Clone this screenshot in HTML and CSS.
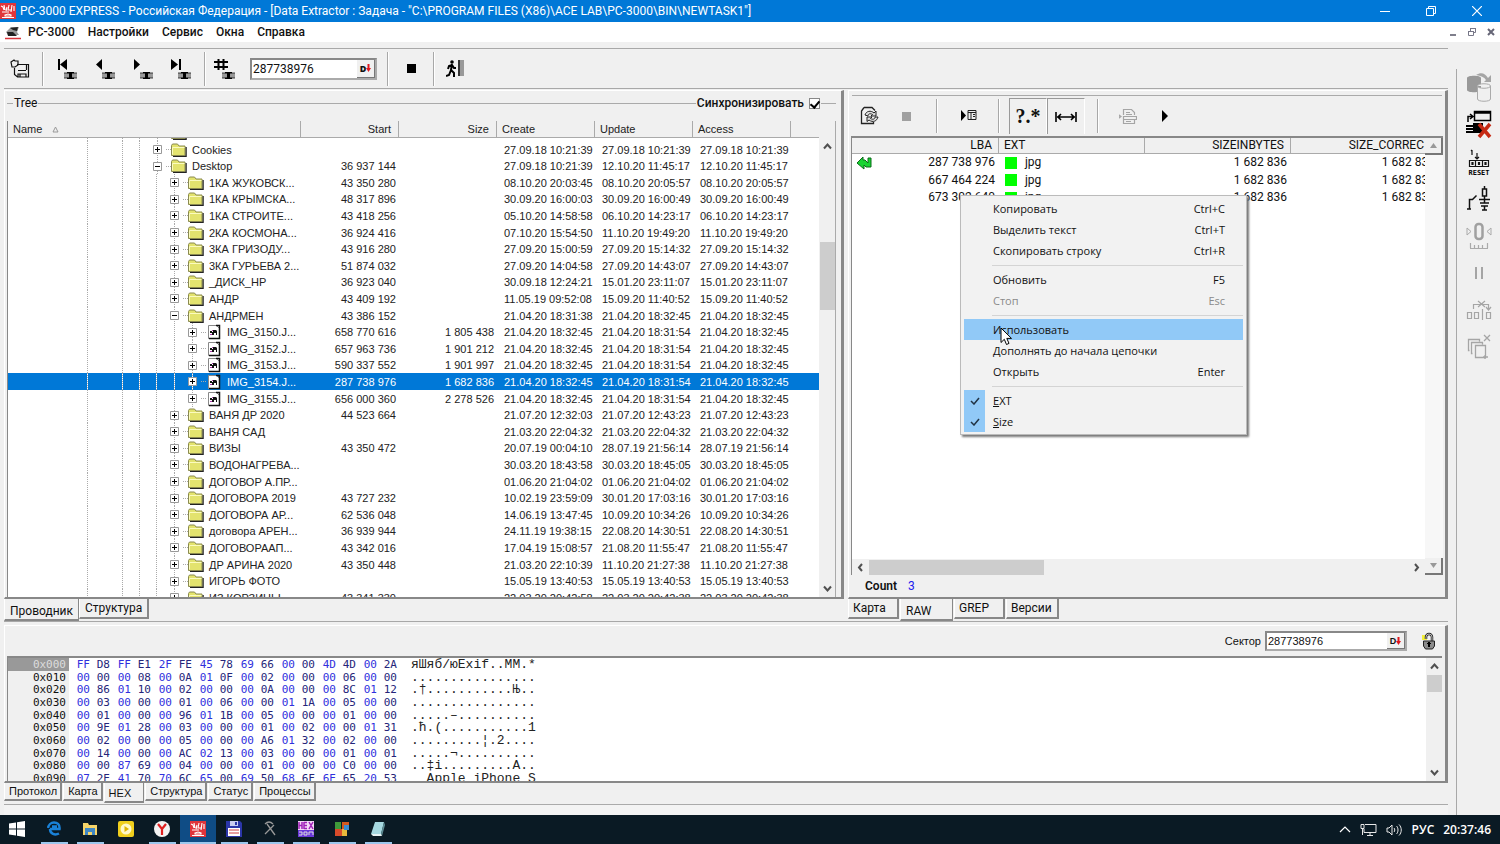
FILE: index.html
```
<!DOCTYPE html>
<html lang="ru">
<head>
    <meta charset="UTF-8">
    <meta name="viewport" content="width=device-width, initial-scale=1.0">
    <title>PC-3000 EXPRESS</title>
    <link rel="stylesheet" href="styles.css">
</head>
<body>
    <svg class="defs" width="0" height="0" aria-hidden="true">
        <symbol id="logo" viewBox="0 0 16 16">
            <rect width="16" height="16" fill="#e0353b"/>
            <path d="M1 3l2 1 1 3M4 2l1 5M7 4L6 8M9 2l-1 5h4M12 2l-1 7M14 3v5M2 9h7M5 12l3-1 3 1v1H5zM2 14.500h12" fill="none" stroke="#fff" stroke-width="1.100"/>
        </symbol>
        <symbol id="disk" viewBox="0 0 13 7">
            <path d="M0 0h13v7H0z" fill="#999"/>
            <path d="M0 1h3v1H0zM10 1h3v1h-3zM0 5h3v1H0zM10 5h3v1h-3z" fill="#666"/>
            <path d="M3 0h7v1.500H8v4h2V7H3V5.500h2v-4H3z" fill="#000"/>
        </symbol>
        <symbol id="folder" viewBox="0 0 16 14">
            <path d="M2 13.500h13V4" fill="none" stroke="#222" stroke-width="1.500"/>
            <path d="M.5 12.500V2.500l1-1.500h5l1.500 2h6v9.500z" fill="#e3e36e" stroke="#8a8a50"/>
            <path d="M1.500 11.500v-7h12" fill="none" stroke="#fbfbc0"/>
        </symbol>
        <symbol id="picture" viewBox="0 0 14 16">
            <path d="M1.500 1.500h8l3 3v10h-11z" fill="#fff" stroke="#888"/>
            <path d="M9 1.500h3.500v13H2" fill="none" stroke="#111" stroke-width="1.500"/>
            <path d="M3 7h2v1h1V6h3l1 1v4H9V9H7v2H5V9H3z" fill="#111"/>
            <path d="M3 10h2v1H3zM5 6h1v1H5z" fill="#b03bb0"/>
        </symbol>
        <symbol id="up" viewBox="0 0 9 9"><path d="M1 6.500l3.500-4 3.500 4" fill="none" stroke="#505050" stroke-width="2"/></symbol>
        <symbol id="down" viewBox="0 0 9 9"><path d="M1 2.500l3.500 4 3.500-4" fill="none" stroke="#505050" stroke-width="2"/></symbol>
        <symbol id="left" viewBox="0 0 9 9"><path d="M6 1L3 4.500 6 8" fill="none" stroke="#505050" stroke-width="2"/></symbol>
        <symbol id="right" viewBox="0 0 9 9"><path d="M3 1l3 3.500L3 8" fill="none" stroke="#505050" stroke-width="2"/></symbol>
        <symbol id="red-arrow" viewBox="0 0 5 8"><path d="M1.500 0h2v4H5L2.500 8 0 4h1.500z" fill="#e0161c"/></symbol>
    </svg>

    <header class="titlebar">
        <svg width="16" height="16"><use href="#logo"/></svg>
        <h1>PC-3000 EXPRESS - Российская Федерация - [Data Extractor : Задача - "C:\PROGRAM FILES (X86)\ACE LAB\PC-3000\BIN\NEWTASK1"]</h1>
        <button aria-label="Свернуть"><svg width="10" height="10"><path d="M0 5.500h10" stroke="#fff"/></svg></button>
        <button aria-label="Развернуть"><svg width="10" height="10"><path d="M.5 2.500h7v7h-7zM2.500 2V.5h7v7H8" fill="none" stroke="#fff"/></svg></button>
        <button aria-label="Закрыть"><svg width="10" height="10"><path d="M0 0l10 10M10 0L0 10" stroke="#fff" stroke-width="1.200"/></svg></button>
    </header>

    <nav class="menubar">
        <svg width="16" height="15"><path d="M1 7l5-5h8l-2 5 2 3H3z" fill="#999"/><path d="M5 3l8-1-1 4-4-1zM2 7h6l4 4H3z" fill="#222"/><path d="M0 13.500h16" stroke="#d8333a" stroke-width="1.500"/></svg>
        <button>PC-3000</button>
        <button>Настройки</button>
        <button>Сервис</button>
        <button>Окна</button>
        <button>Справка</button>
        <div class="mdi">
            <button aria-label="Свернуть окно"><svg width="10" height="10"><path d="M2 8h6" stroke="#556" stroke-width="1.500"/></svg></button>
            <button aria-label="Восстановить окно"><svg width="10" height="10"><path d="M1.500 4.500h5v4h-5zM3.500 4V1.500h5v4H7M1 4.500h6M3 1.500h6" fill="none" stroke="#778"/></svg></button>
            <button aria-label="Закрыть окно"><svg width="10" height="10"><path d="M2 2l6 6M8 2L2 8" stroke="#667" stroke-width="2"/></svg></button>
        </div>
    </nav>

    <div class="shell">
        <main class="workspace">
            <div class="toolbar">
                <button class="tool-save" aria-label="Сохранить задачу"><svg width="20" height="20"><path d="M7 5.500h11.500v12.500h-11L4.500 15.500V9M8 11.500h8M16.500 5v6M8 18v-3h8v3M10 15.500v3M1 3l3-2 1 1h3v4L5 8H2z" fill="none" stroke="#111" stroke-width="1.200"/></svg></button>
                <span class="sep"></span>
                <button class="nav" aria-label="В начало"><svg width="20" height="22"><path d="M1 1h2v11H1zM10 1v11L3 6.500z" fill="#000"/><use href="#disk" x="7" y="14" width="13" height="7"/></svg></button>
                <button class="nav" aria-label="Назад"><svg width="20" height="22"><path d="M7 1v11L1 6.500z" fill="#000"/><use href="#disk" x="7" y="14" width="13" height="7"/></svg></button>
                <button class="nav" aria-label="Вперёд"><svg width="20" height="22"><path d="M1 1v11l6-5.500z" fill="#000"/><use href="#disk" x="7" y="14" width="13" height="7"/></svg></button>
                <button class="nav" aria-label="В конец"><svg width="20" height="22"><path d="M0 1v11l7-5.500zM8 1h2v11H8z" fill="#000"/><use href="#disk" x="7" y="14" width="13" height="7"/></svg></button>
                <span class="sep"></span>
                <button class="nav" aria-label="Перейти к сектору"><svg width="22" height="22"><path d="M4.500 1v11M9.500 1v11M0 4h14M0 9h14" stroke="#000" stroke-width="2"/><use href="#disk" x="8" y="14" width="13" height="7"/></svg></button>
                <div class="field">
                    <input type="text" value="287738976" aria-label="LBA">
                    <button>D<svg width="5" height="8"><use href="#red-arrow"/></svg></button>
                </div>
                <span class="sep"></span>
                <button class="tool-stop" aria-label="Стоп"><svg width="9" height="9"><rect width="9" height="9"/></svg></button>
                <span class="sep"></span>
                <button class="tool-exit" aria-label="Выход"><svg width="20" height="20"><path d="M12 1h2v16h-2z" fill="#333"/><path d="M14 1h4v16h-4z" fill="#999"/><circle cx="6" cy="3" r="1.800"/><path d="M6 5l-1 6 3 3v4M5 11l-2 5-3 1M2 10l1-3 3-1 2 3h2" fill="none" stroke="#000" stroke-width="2"/></svg></button>
            </div>

            <div class="panes">
                <section class="pane-left">
                    <div class="frame">
                        <div class="tree-head">
                            <h2>Tree</h2>
                            <label class="sync">Синхронизировать <input type="checkbox" checked></label>
                        </div>
                        <div class="tree-body">
                            <div class="tree-scroll" id="treeScroll">
                                <table class="tree">
                                    <colgroup><col class="c-name"><col class="c-num"><col class="c-num"><col class="c-date"><col class="c-date"><col class="c-date"><col></colgroup>
                                    <thead>
                                        <tr><th>Name <svg width="7" height="7"><path d="M3.500 1L6 6H1z" fill="none" stroke="#999"/></svg></th><th class="num">Start</th><th class="num">Size</th><th>Create</th><th>Update</th><th>Access</th><th></th></tr>
                                    </thead>
                                    <tbody id="treeRows"></tbody>
                                </table>
                            </div>
                            <div class="vscroll">
                                <svg width="9" height="9"><use href="#up"/></svg>
                                <span class="track-tree"></span>
                                <svg width="9" height="9"><use href="#down"/></svg>
                            </div>
                        </div>
                    </div>
                    <div class="tabs">
                        <button class="active">Проводник</button>
                        <button>Структура</button>
                    </div>
                </section>

                <section class="pane-right">
                    <div class="frame">
                        <div class="raw-tools">
                            <button class="t-refresh" aria-label="Обновить"><svg width="20" height="20"><path d="M4 1.500h8l3 3M4 1.500L1.500 5v12.500h12V16" fill="none" stroke="#222" stroke-width="1.300"/><path d="M5 9c1-4 6-5 9-2l2-2v5h-5l1.500-1.500C10 7 8 8 8 10zM18 11c-1 4-5 6-9 3l-2 1.500V11h5l-1.500 1.500C13 14 15 13 15 11z" fill="#ddd" stroke="#222"/></svg></button>
                            <button class="t-stop" aria-label="Остановить" disabled><svg width="9" height="9"><rect width="9" height="9" fill="#a0a0a0"/></svg></button>
                            <span class="sep"></span>
                            <button class="t-panel" aria-label="Панель"><svg width="17" height="14"><path d="M1 1v11l5-5.500z"/><path d="M8 1.500h8v9H8zM8 3.500h8M11 4v6M13 5.500h2M13 7.500h2" fill="none" stroke="#222"/></svg></button>
                            <span class="sep"></span>
                            <button class="toggle mask" aria-label="Расширение">?.*</button>
                            <button class="toggle" aria-label="Размер"><svg width="22" height="12"><path d="M1 1v10M21 1v10M2 6h18M6 3L3 6l3 3M16 3l3 3-3 3" fill="none" stroke="#000" stroke-width="1.600"/></svg></button>
                            <span class="sep"></span>
                            <button class="t-print" aria-label="Отчёт" disabled><svg width="18" height="17"><path d="M4.500 7V1.500h8l3 3V7M4.500 8.500h13v3h-13zM4.500 12v3.500h11V12M7 4.500h4M7 6.500h6M7 13.500h5M0 7v3l2-1.500z" fill="none" stroke="#a5a5a5" stroke-width="1.200"/></svg></button>
                            <button class="t-play" aria-label="Запуск"><svg width="6" height="12"><path d="M0 0v12l6-6z"/></svg></button>
                        </div>
                        <div class="raw-box">
                            <div class="raw-main">
                                <div class="raw-scroll">
                                    <table class="raw">
                                        <colgroup><col class="r-mark"><col class="r-lba"><col class="r-size"><col class="r-size"><col></colgroup>
                                        <thead>
                                            <tr><th colspan="2" class="num">LBA</th><th>EXT</th><th class="num">SIZEINBYTES</th><th class="num">SIZE_CORREC</th></tr>
                                        </thead>
                                        <tbody id="rawRows"></tbody>
                                    </table>
                                </div>
                                <div class="hscroll">
                                    <svg width="9" height="9"><use href="#left"/></svg>
                                    <span></span>
                                    <svg width="9" height="9"><use href="#right"/></svg>
                                </div>
                            </div>
                            <div class="raw-side">
                                <button aria-label="Вверх"><svg width="7" height="5"><path d="M3.500 0L7 5H0z" fill="#999"/></svg></button>
                                <button aria-label="Вниз"><svg width="7" height="5"><path d="M3.500 5L7 0H0z" fill="#999"/></svg></button>
                            </div>

                            <ul class="context-menu">
                                <li><button><span>Копировать</span><kbd>Ctrl+C</kbd></button></li>
                                <li><button><span>Выделить текст</span><kbd>Ctrl+T</kbd></button></li>
                                <li><button><span>Скопировать строку</span><kbd>Ctrl+R</kbd></button></li>
                                <li class="divider"></li>
                                <li><button><span>Обновить</span><kbd>F5</kbd></button></li>
                                <li><button disabled><span>Стоп</span><kbd>Esc</kbd></button></li>
                                <li class="divider"></li>
                                <li class="hover"><button><span>Использовать</span></button>
                                    <svg class="cursor" width="13" height="19"><path d="M1 1v14.500l3.300-3.200 2.200 5.200 2.500-1.100-2.200-5H11.500z" fill="#fff" stroke="#000"/></svg>
                                </li>
                                <li><button><span>Дополнять до начала цепочки</span></button></li>
                                <li><button><span>Открыть</span><kbd>Enter</kbd></button></li>
                                <li class="divider"></li>
                                <li class="checked"><button><svg width="10" height="8"><path d="M1 4l3 3 5-6" fill="none" stroke="#234" stroke-width="1.500"/></svg><span><u>E</u>XT</span></button></li>
                                <li class="checked"><button><svg width="10" height="8"><path d="M1 4l3 3 5-6" fill="none" stroke="#234" stroke-width="1.500"/></svg><span><u>S</u>ize</span></button></li>
                            </ul>
                        </div>
                        <p class="count">Count <b>3</b></p>
                    </div>
                    <div class="tabs raw-tabs">
                        <button>Карта</button>
                        <button class="active">RAW</button>
                        <button>GREP</button>
                        <button>Версии</button>
                    </div>
                </section>
            </div>

            <section class="hex-pane">
                <div class="frame">
                    <div class="hex-tools">
                        <label for="sector">Сектор</label>
                        <div class="field">
                            <input type="text" id="sector" value="287738976">
                            <button>D<svg width="5" height="8"><use href="#red-arrow"/></svg></button>
                        </div>
                        <button class="lock" aria-label="Блокировка"><svg width="14" height="18"><path d="M0 3h5v5H0z" fill="#f4f03c"/><path d="M4 7V5a3 3 0 0 1 6 0v5" fill="none" stroke="#222" stroke-width="2.500"/><path d="M4 7V5a3 3 0 0 1 6 0v5" fill="none" stroke="#bbb"/><path d="M1.500 9h11v5l-2 3h-7l-2-3z" fill="#8c8c8c" stroke="#222"/><path d="M6 10h2v5H6zM5 11h4v1H5z"/></svg></button>
                    </div>
                    <div class="hex-box">
                        <div class="hex-scroll">
                            <table class="hex"><tbody id="hexRows"></tbody></table>
                        </div>
                        <div class="vscroll">
                            <svg width="9" height="9"><use href="#up"/></svg>
                            <span class="track-hex"></span>
                            <svg width="9" height="9"><use href="#down"/></svg>
                        </div>
                    </div>
                </div>
                <div class="tabs hex-tabs">
                    <button>Протокол</button>
                    <button>Карта</button>
                    <button class="active">HEX</button>
                    <button>Структура</button>
                    <button>Статус</button>
                    <button>Процессы</button>
                </div>
            </section>
            <div class="statusbar"></div>
        </main>

        <aside class="side">
            <button aria-label="Образы дисков" disabled><svg width="28" height="32"><path d="M2 6c0-3 14-3 14 0v12c0 3-14 3-14 0z" fill="#999"/><path d="M11 3c5-3 9-2 12 3l3-3v7h-7l2-2c-2-3-5-4-10-5z" fill="#a5a5a5"/><path d="M12.500 14c0-3 13-3 13 0v13c0 3-13 3-13 0zM12.500 14c0 3 13 3 13 0" fill="#f0f0f0" stroke="#aaa"/></svg></button>
            <button aria-label="Закрыть порт"><svg width="28" height="30"><path d="M9.500 1.500h16v9h-16zM9 3h17M3 12V6.500h4M5 4l3 2.500L5 9" fill="none" stroke="#000" stroke-width="1.500"/><path d="M1 15h17v2H1zM1 18h17v2H1zM1 21h16v2H1zM8 13h10v9H8z"/><path d="M14 14l11 13M25 14L14 27" stroke="#c62a14" stroke-width="3.500"/></svg></button>
            <button aria-label="RESET"><svg width="24" height="26"><path d="M5 1v5M4 2l1-1M10 4v6M8 8l2 2 2-2M2.500 11.500h19v6h-19zM8.500 11v7M15.500 11v7M5 13.500h1v2H5zM11.500 13.500h1v2h-1zM18 13.500h1v2h-1z" fill="none" stroke="#111" stroke-width="1.200"/><text x="12" y="26" text-anchor="middle">RESET</text></svg></button>
            <button aria-label="Питание"><svg width="26" height="28"><path d="M1 24h4M3.500 24V14.500h3l4-4M13 14.500h11M18.500 1v3M16.500 4h4v7h-4zM18.500 11v7M14 18h9M15 21h7M18.500 21v4M16 25h5" fill="none" stroke="#111" stroke-width="1.500"/></svg></button>
            <button aria-label="Счётчик" disabled><svg width="26" height="28"><path d="M1 6v7l4-3.500zM25 6v7l-4-3.500z" fill="none" stroke="#aaa"/><rect x="9.500" y="2" width="7" height="15" rx="3" fill="none" stroke="#a0a0a0" stroke-width="2.500"/><path d="M4 26.500h18M4.500 21v5M8.500 23v3M12.500 23v3M16.500 23v3M21.500 21v5" fill="none" stroke="#aaa" stroke-width="1.200"/></svg></button>
            <button aria-label="Пауза" disabled><svg width="10" height="12"><path d="M2 0v12M8 0v12" stroke="#a5a5a5" stroke-width="2"/></svg></button>
            <button aria-label="Удалить блок" disabled><svg width="26" height="20"><path d="M1.500 12.500h4v6h-4zM8.500 12.500h4v6h-4zM20.500 12.500h4v6h-4zM16.500 9v11M7.500 9V4.500h15V9M20 7l2.500 3L25 7M12 1l7 6M19 1l-7 6" fill="none" stroke="#a5a5a5" stroke-width="1.200"/></svg></button>
            <button aria-label="Копии" disabled><svg width="26" height="26"><path d="M3.500 16.500h-1v-11h11v2M6.500 19.500h-1v-11h11v2M9.500 11.500h10v12h-10zM17 23h5M19 21v4M18 1l6 6M24 1l-6 6" fill="none" stroke="#a5a5a5" stroke-width="1.300"/></svg></button>
        </aside>
    </div>

    <footer class="taskbar">
        <button aria-label="Пуск"><svg width="16" height="16"><path d="M0 2.500L7 1.500V7.500H0zM8 1.300L16 0v7.500H8zM0 8.500h7v6L0 13.500zM8 8.500h8V16l-8-1.300z" fill="#fff"/></svg></button>
        <button class="open" aria-label="Edge"><svg width="14" height="15"><path d="M3 8h9.500C13 3 10 1.500 7 1.500 4 1.500 1.500 4 1 7M3 8c0 5 5 6.500 9 4.500M5 5.500h5" fill="none" stroke="#1a82d8" stroke-width="2.500"/></svg></button>
        <button class="open" aria-label="Проводник"><svg width="16" height="14"><path d="M1 1h5l1 2h8v10H1z" fill="#f6d468"/><path d="M3 6h10v7h-3v-3H6v3H3z" fill="#3f87c4"/></svg></button>
        <button aria-label="Плеер"><svg width="16" height="16"><rect width="16" height="16" rx="2" fill="#f0cf1d"/><circle cx="8" cy="8" r="5.500" fill="#fff8c8"/><path d="M6.500 5v6L11 8z" fill="#e0b400"/></svg></button>
        <button class="open" aria-label="Яндекс"><svg width="16" height="16"><circle cx="8" cy="8" r="8" fill="#f3f3f3"/><path d="M4 3l4 5 4-5M8 8v6" fill="none" stroke="#e02020" stroke-width="2.200"/></svg></button>
        <button class="current" aria-label="PC-3000"><svg width="16" height="16"><use href="#logo"/></svg></button>
        <button class="open" aria-label="Total Commander"><svg width="16" height="16"><path d="M0 0h14l2 2v14H0z" fill="#2b36a8"/><path d="M4 0h8v5H4z" fill="#c8ccf0"/><path d="M9 1h2v3H9z" fill="#2b36a8"/><path d="M2 7h12v8H2z" fill="#fff"/><path d="M3 9h10M3 12h10" stroke="#d04040"/></svg></button>
        <button class="open" aria-label="Утилиты"><svg width="14" height="16"><path d="M2 3c3-3 6-2 8 0M4 3l8 11M11 4L2 13" fill="none" stroke="#999" stroke-width="1.300"/></svg></button>
        <button class="open" aria-label="HEX"><svg width="16" height="16"><path d="M0 0h16v9H0z" fill="#f3d8f6"/><path d="M0 9h16v7H0z" fill="#6a38d8"/><path d="M1 1v7M4 1v7M1 4.500h3M6 1v7M6 1.500h3M6 4.500h3M6 7.500h3M11 1l4 7M15 1l-4 7" stroke="#a020b8" stroke-width="1.500"/><path d="M1 11h3v3H1M6 11h3v3H6zM11 14v-3h4v3" fill="none" stroke="#ddd"/></svg></button>
        <button class="open" aria-label="Монитор"><svg width="16" height="16"><path d="M1 1h6v7H1z" fill="#3f9a3a"/><path d="M8 1h7v7H8z" fill="#d45a20"/><path d="M1 8h7v7H1z" fill="#d84b2a"/><path d="M8 8h5v7H8z" fill="#e8b93c"/><path d="M10 4h5v5h-5z" fill="#3c8cd0"/></svg></button>
        <button class="open" aria-label="Блокнот"><svg width="16" height="16"><path d="M5 1h9l-3 12H1z" fill="#a6d8e0"/><path d="M14 1l1 3-3 11-1-2z" fill="#5d8d95"/><path d="M1 13h10l1 2H3z" fill="#e8f3f4"/></svg></button>
        <div class="tray">
            <svg width="12" height="7"><path d="M1 6l5-5 5 5" fill="none" stroke="#fff" stroke-width="1.200"/></svg>
            <svg width="17" height="14"><path d="M5 1.500h11v8H4V6M7 12.500h6M10 10v2M1 1.500h3v4H1zM2.500 6v6" fill="none" stroke="#e8e8e8"/></svg>
            <svg width="17" height="14"><path d="M1 5h2l3-3v10L3 9H1zM8 5c1 1 1 3 0 4M10.500 3c2 2 2 6 0 8M13 1.500c3 3 3 8 0 11" fill="none" stroke="#e8e8e8"/></svg>
            <span>РУС</span>
            <time>20:37:46</time>
        </div>
    </footer>

    <script>
        // level, open, name, start, size, create, update, access
        const tree = [
            [0, false, "", "", "", "", "", ""],
            [0, false, "Cookies", "", "", "27.09.18 10:21:39", "27.09.18 10:21:39", "27.09.18 10:21:39"],
            [0, true, "Desktop", "36 937 144", "", "27.09.18 10:21:39", "12.10.20 11:45:17", "12.10.20 11:45:17"],
            [1, false, "1КА ЖУКОВСК...", "43 350 280", "", "08.10.20 20:03:45", "08.10.20 20:05:57", "08.10.20 20:05:57"],
            [1, false, "1КА КРЫМСКА...", "48 317 896", "", "30.09.20 16:00:03", "30.09.20 16:00:49", "30.09.20 16:00:49"],
            [1, false, "1КА СТРОИТЕ...", "43 418 256", "", "05.10.20 14:58:58", "06.10.20 14:23:17", "06.10.20 14:23:17"],
            [1, false, "2КА КОСМОНА...", "36 924 416", "", "07.10.20 15:54:50", "11.10.20 19:49:20", "11.10.20 19:49:20"],
            [1, false, "3КА ГРИЗОДУ...", "43 916 280", "", "27.09.20 15:00:59", "27.09.20 15:14:32", "27.09.20 15:14:32"],
            [1, false, "3КА ГУРЬЕВА 2...", "51 874 032", "", "27.09.20 14:04:58", "27.09.20 14:43:07", "27.09.20 14:43:07"],
            [1, false, "_ДИСК_HP", "36 923 040", "", "30.09.18 12:24:21", "15.01.20 23:11:07", "15.01.20 23:11:07"],
            [1, false, "АНДР", "43 409 192", "", "11.05.19 09:52:08", "15.09.20 11:40:52", "15.09.20 11:40:52"],
            [1, true, "АНДРМЕН", "43 386 152", "", "21.04.20 18:31:38", "21.04.20 18:32:45", "21.04.20 18:32:45"],
            [2, false, "IMG_3150.J...", "658 770 616", "1 805 438", "21.04.20 18:32:45", "21.04.20 18:31:54", "21.04.20 18:32:45"],
            [2, false, "IMG_3152.J...", "657 963 736", "1 901 212", "21.04.20 18:32:45", "21.04.20 18:31:54", "21.04.20 18:32:45"],
            [2, false, "IMG_3153.J...", "590 337 552", "1 901 997", "21.04.20 18:32:45", "21.04.20 18:31:54", "21.04.20 18:32:45"],
            [2, false, "IMG_3154.J...", "287 738 976", "1 682 836", "21.04.20 18:32:45", "21.04.20 18:31:54", "21.04.20 18:32:45"],
            [2, false, "IMG_3155.J...", "656 000 360", "2 278 526", "21.04.20 18:32:45", "21.04.20 18:31:54", "21.04.20 18:32:45"],
            [1, false, "ВАНЯ ДР 2020", "44 523 664", "", "21.07.20 12:32:03", "21.07.20 12:43:23", "21.07.20 12:43:23"],
            [1, false, "ВАНЯ САД", "", "", "21.03.20 22:04:32", "21.03.20 22:04:32", "21.03.20 22:04:32"],
            [1, false, "ВИЗЫ", "43 350 472", "", "20.07.19 00:04:10", "28.07.19 21:56:14", "28.07.19 21:56:14"],
            [1, false, "ВОДОНАГРЕВА...", "", "", "30.03.20 18:43:58", "30.03.20 18:45:05", "30.03.20 18:45:05"],
            [1, false, "ДОГОВОР А.ПР...", "", "", "01.06.20 21:04:02", "01.06.20 21:04:02", "01.06.20 21:04:02"],
            [1, false, "ДОГОВОРА 2019", "43 727 232", "", "10.02.19 23:59:09", "30.01.20 17:03:16", "30.01.20 17:03:16"],
            [1, false, "ДОГОВОРА АР...", "62 536 048", "", "14.06.19 13:47:45", "10.09.20 10:34:26", "10.09.20 10:34:26"],
            [1, false, "договора АРЕН...", "36 939 944", "", "24.11.19 19:38:15", "22.08.20 14:30:51", "22.08.20 14:30:51"],
            [1, false, "ДОГОВОРААП...", "43 342 016", "", "17.04.19 15:08:57", "21.08.20 11:55:47", "21.08.20 11:55:47"],
            [1, false, "ДР АРИНА 2020", "43 350 448", "", "21.03.20 22:10:39", "11.10.20 21:27:38", "11.10.20 21:27:38"],
            [1, false, "ИГОРЬ ФОТО", "", "", "15.05.19 13:40:53", "15.05.19 13:40:53", "15.05.19 13:40:53"],
            [1, false, "ИЗ КОРЗИНЫ", "43 341 330", "", "22.03.20 20:42:58", "22.03.20 20:42:38", "22.03.20 20:42:38"]
        ];
        const selected = 15;

        function nameCell(level, open, name) {
            let guides = '<i class="guide"></i><i class="gap"></i><i class="guide"></i><i class="guide"></i>';
            for (let i = 0; i < level; i++) {
                guides += `<i class="guide${i > 0 ? " own" : ""}"></i>`;
            }
            const icon = level === 2
                ? '<svg width="16" height="16"><use href="#picture"/></svg>'
                : '<svg width="16" height="14"><use href="#folder"/></svg>';
            return `<div class="node">${guides}<i class="guide own"><button class="expander" aria-label="${open ? "Свернуть" : "Развернуть"}">` +
                `<svg width="9" height="9"><path d="M.5 .5h8v8h-8z" fill="#fff" stroke="#999"/><path d="M2 4.500h5${open ? "" : "M4.500 2v5"}" stroke="#000"/></svg>` +
                `</button></i><i class="stub"></i>${icon}<span>${name}</span></div>`;
        }

        document.getElementById("treeRows").innerHTML = tree.map((r, i) =>
            `<tr${i === selected ? ' class="selected"' : ""}><td>${nameCell(r[0], r[1], r[2])}</td>` +
            `<td class="num">${r[3]}</td><td class="num">${r[4]}</td><td>${r[5]}</td><td>${r[6]}</td><td>${r[7]}</td><td></td></tr>`
        ).join("");
        document.getElementById("treeScroll").scrollTop = 14;

        const marker = '<svg width="16" height="14"><path d="M1 7l6-6v3h2l3 3V2h3v9h-5L8 9v4z" fill="#19d432" stroke="#0b6b18"/></svg>';
        document.getElementById("rawRows").innerHTML = ["287 738 976", "667 464 224", "673 302 640"].map((lba, i) =>
            `<tr><td>${i === 0 ? marker : ""}</td><td class="num">${lba}</td><td><i class="swatch"></i>jpg</td>` +
            `<td class="num">1 682 836</td><td class="num">1 682 836</td></tr>`
        ).join("");

        const dump = [
            ["FF D8 FF E1 2F FE 45 78 69 66 00 00 4D 4D 00 2A", "яШяб/юExif..MM.*"],
            ["00 00 00 08 00 0A 01 0F 00 02 00 00 00 06 00 00", "................"],
            ["00 86 01 10 00 02 00 00 00 0A 00 00 00 8C 01 12", ".†...........Њ.."],
            ["00 03 00 00 00 01 00 06 00 00 01 1A 00 05 00 00", "................"],
            ["00 01 00 00 00 96 01 1B 00 05 00 00 00 01 00 00", ".....–.........."],
            ["00 9E 01 28 00 03 00 00 00 01 00 02 00 00 01 31", ".ћ.(...........1"],
            ["00 02 00 00 00 05 00 00 00 A6 01 32 00 02 00 00", ".........¦.2...."],
            ["00 14 00 00 00 AC 02 13 00 03 00 00 00 01 00 01", ".....¬.........."],
            ["00 00 87 69 00 04 00 00 00 01 00 00 00 C0 00 00", "..‡i.........А.."],
            ["07 2E 41 70 70 6C 65 00 69 50 68 6F 6E 65 20 53", "  Apple iPhone S"]
        ];
        document.getElementById("hexRows").innerHTML = dump.map((row, i) =>
            `<tr><th>0x0${i}0</th>${row[0].split(" ").map(b => `<td>${b}</td>`).join("")}<td class="ascii">${row[1]}</td></tr>`
        ).join("");
    </script>
</body>
</html>
```
FILE: styles.css
```
* {
    box-sizing: border-box;
}

body {
    margin: 0;
    height: 100vh;
    display: flex;
    flex-direction: column;
    overflow: hidden;
    background: #f0f0f0;
    color: #111;
    font-family: "Open Sans", "Noto Sans", sans-serif;
    font-size: 11px;
}

button {
    margin: 0;
    padding: 0;
    border: none;
    background: none;
    color: inherit;
    font: inherit;
    display: flex;
    align-items: center;
    justify-content: center;
}

svg {
    flex: none;
    display: block;
}

.defs {
    position: absolute;
}

h1, h2, p, ul {
    margin: 0;
    padding: 0;
    font-weight: normal;
}

/* title and menu */
.titlebar {
    display: flex;
    align-items: center;
    flex: none;
    height: 22px;
    background: #0078d7;
    color: #fff;
}

.titlebar h1 {
    flex: 1;
    padding-left: 4px;
    font-family: Roboto, sans-serif;
    font-size: 12px;
    white-space: nowrap;
    overflow: hidden;
}

.titlebar button {
    width: 46px;
    height: 22px;
}

.menubar {
    display: flex;
    align-items: center;
    flex: none;
    height: 20px;
    padding-left: 5px;
    gap: 13px;
    background: #fff;
    font-family: Roboto, sans-serif;
    font-size: 12px;
    font-weight: 500;
}

.menubar svg + button {
    margin-left: -6px;
}

.mdi {
    display: flex;
    gap: 1px;
    margin-left: auto;
}

.mdi button {
    width: 18px;
    height: 18px;
}

.shell {
    flex: 1;
    min-height: 0;
    display: flex;
}

.workspace {
    flex: 1;
    min-width: 0;
    display: flex;
    flex-direction: column;
    padding: 6px 8px 0 4px;
}

/* main toolbar */
.toolbar {
    display: flex;
    align-items: center;
    flex: none;
    height: 41px;
    border-top: 1px solid #a8a8a8;
    border-bottom: 1px solid #a8a8a8;
}

.sep {
    width: 2px;
    height: 34px;
    border-left: 1px solid #a8a8a8;
    border-right: 1px solid #fff;
}

.tool-save {
    width: 38px;
    padding-right: 6px;
}

.tool-save + .sep {
    margin-right: 4px;
}

.nav {
    width: 38px;
}

.nav + .sep {
    margin-left: 4px;
}

.field {
    display: flex;
    width: 127px;
    height: 22px;
    background: #fff;
    border: 2px solid #888;
    border-right-color: #aaa;
    border-bottom-color: #aaa;
}

.field input {
    flex: 1;
    min-width: 0;
    padding: 0 1px;
    border: none;
    outline: none;
    background: none;
    color: #111;
    font-family: inherit;
    font-size: 12px;
}

.field button {
    width: 18px;
    background: #f0f0f0;
    border-right: 1px solid #777;
    border-bottom: 1px solid #777;
    font-size: 9px;
    font-weight: 800;
}

.toolbar .field {
    margin: 0 10px 0 6px;
}

.toolbar .field input {
    font-family: Roboto, sans-serif;
}

.tool-stop {
    width: 44px;
}

.tool-exit {
    width: 42px;
}

/* panes */
.panes {
    flex: 1;
    min-height: 0;
    display: grid;
    grid-template-columns: minmax(0, 1fr) 600px;
    gap: 4px;
    padding-top: 1px;
    border-bottom: 1px solid #a8a8a8;
}

.pane-left, .pane-right {
    display: flex;
    flex-direction: column;
    min-height: 0;
}

.frame {
    flex: 1;
    min-height: 0;
    display: flex;
    flex-direction: column;
    border: 1px solid #fff;
    border-right: 3px solid #888;
    border-bottom: 2px solid #888;
}

.tabs {
    display: flex;
    flex: none;
    align-items: flex-start;
    height: 22px;
    font-family: Roboto, "Open Sans", sans-serif;
    font-size: 12px;
}

.tabs button {
    height: 20px;
    padding: 0 5px;
    border-right: 2px solid #888;
    border-bottom: 2px solid #888;
    border-left: 1px solid #fff;
}

.tabs .active {
    height: 22px;
    padding: 3px 5px 0;
    border-right-width: 1px;
}

/* tree */
.tree-head {
    display: flex;
    align-items: center;
    flex: none;
    height: 30px;
    margin: 0 5px 0 2px;
    padding: 0 15px 6px 6px;
    background: linear-gradient(#aaa, #aaa) 0 12px / 100% 1px no-repeat;
}

.tree-head h2, .sync {
    padding: 0 1px;
    background: #f0f0f0;
}

.tree-head h2 {
    font-family: Roboto, sans-serif;
    font-size: 12px;
}

.sync {
    display: flex;
    align-items: center;
    gap: 5px;
    margin-left: auto;
    font-family: Roboto, sans-serif;
    font-size: 12px;
    font-weight: 500;
}

.sync input {
    appearance: none;
    width: 11px;
    height: 11px;
    margin: 0;
    border: 1px solid #888;
    background: #fff;
}

.sync input:checked::after {
    content: "";
    display: block;
    width: 4px;
    height: 7px;
    margin: 0 0 0 2px;
    border: solid #000;
    border-width: 0 2px 2px 0;
    transform: rotate(40deg);
}

.tree-body {
    flex: 1;
    min-height: 0;
    display: flex;
    margin: 0 5px 0 2px;
    border-left: 1px solid #888;
    border-right: 1px solid #aaa;
    background: #fff;
}

.tree-scroll {
    flex: 1;
    min-width: 0;
    overflow: hidden;
}

table {
    border-spacing: 0;
    border-collapse: separate;
    table-layout: fixed;
    width: 100%;
}

th {
    font-weight: normal;
    text-align: left;
}

td, th {
    padding: 0;
    white-space: nowrap;
}

.tree {
    font-family: "Liberation Sans", Arial, sans-serif;
    font-size: 11px;
    line-height: 16px;
    color: #222;
}

.c-name {
    width: 293px;
}

.c-num, .c-date {
    width: 98px;
}

.tree thead th {
    position: sticky;
    top: 0;
    z-index: 1;
    height: 17px;
    padding: 0 7px 0 5px;
    background: #f0f0f0;
    border-right: 1px solid #aaa;
    border-bottom: 1px solid #aaa;
}

.tree thead th:last-child {
    border-right: none;
}

.tree th svg {
    display: inline-block;
    margin-left: 7px;
}

.tree th.num, .tree td.num, .raw .num {
    text-align: right;
}

.tree td {
    height: 17px;
    padding-left: 7px;
}

.tree tr:nth-child(5n+3) td, .tree tr:nth-child(5n) td {
    height: 16px;
}

.tree td:first-child {
    height: inherit;
    padding-left: 71px;
}

.tree td.num {
    padding-right: 3px;
}

.node {
    display: flex;
    align-items: center;
    height: 16px;
}

.guide {
    display: flex;
    flex: none;
    align-items: center;
    justify-content: center;
    width: 17px;
    height: 18px;
    background: repeating-linear-gradient(#aaa 0 1px, #fff 1px 2px) center / 1px 100% no-repeat;
}

.own {
    width: 18px;
}

.gap {
    width: 18px;
}

.stub {
    width: 5px;
    border-top: 1px dotted #aaa;
}

.node span {
    margin-left: 5px;
}

.selected td {
    background: #0078d7;
    color: #fff;
}

.vscroll {
    display: flex;
    flex-direction: column;
    align-items: center;
    flex: none;
    width: 16px;
    padding: 4px 0;
    background: #f0f0f0;
}

.vscroll span {
    width: 15px;
    background: #cdcdcd;
}

.vscroll svg:last-child {
    margin-top: auto;
}

.tree-body .vscroll {
    padding-top: 21px;
}

.track-tree {
    height: 68px;
    margin-top: 91px;
}

/* raw list */
.raw-tools {
    display: flex;
    align-items: center;
    flex: none;
    height: 41px;
    margin: 4px 3px 0;
    border-top: 1px solid #aaa;
}

.t-refresh {
    width: 36px;
}

.t-stop {
    width: 36px;
}

.t-stop + .sep {
    margin-left: 12px;
}

.t-panel {
    width: 60px;
}

.toggle {
    width: 38px;
    height: 36px;
    border-top: 1px solid #999;
    border-left: 1px solid #999;
    border-right: 1px solid #fff;
}

.mask {
    margin-left: 9px;
    font-family: "Liberation Serif", serif;
    font-size: 20px;
    font-weight: bold;
}

.toggle + .sep {
    margin-left: 12px;
}

.t-print {
    width: 58px;
}

.t-play {
    width: 16px;
}

.raw-box {
    position: relative;
    flex: 1;
    min-height: 0;
    display: flex;
    margin: 0 2px 0 2px;
    border-top: 2px solid #888;
    border-left: 1px solid #888;
    background: #f7f7f7;
}

.raw-main {
    flex: 1;
    min-width: 0;
    display: flex;
    flex-direction: column;
    background: #fff;
}

.raw-scroll {
    flex: 1;
    min-height: 0;
    overflow: hidden;
}

/* last column runs under the scroll buttons */
.raw {
    width: calc(100% + 14px);
    font-size: 11px;
}

.r-mark {
    width: 24px;
}

.r-lba {
    width: 123px;
}

.r-size {
    width: 146px;
}

.raw th {
    height: 16px;
    padding: 0 6px 0 5px;
    background: #f0f0f0;
    border-right: 1px solid #aaa;
    border-bottom: 1px solid #aaa;
    font-family: Roboto, sans-serif;
    font-size: 12px;
    line-height: 15px;
}

.raw th:last-child {
    padding-right: 15px;
    border-right: none;
}

.raw td {
    height: 17px;
    padding: 0 4px;
    line-height: 17px;
    font-size: 12px;
    font-family: Roboto, sans-serif;
}

.raw tr:nth-child(2) td {
    height: 18px;
}

.swatch {
    display: inline-block;
    width: 12px;
    height: 12px;
    margin: 0 8px 0 2px;
    vertical-align: middle;
    background: #0f0;
}

.hscroll {
    display: flex;
    align-items: center;
    flex: none;
    height: 16px;
    padding: 0 4px;
    background: #f0f0f0;
}

.hscroll span {
    flex: 0 1 175px;
    height: 15px;
    margin-left: 4px;
    background: #cdcdcd;
}

.hscroll svg:last-child {
    margin-left: auto;
}

.raw-side {
    display: flex;
    flex-direction: column;
    justify-content: space-between;
    width: 18px;
}

.raw-side button {
    height: 17px;
    background: #f0f0f0;
    border-right: 2px solid #777;
    border-bottom: 2px solid #777;
}

.count {
    flex: none;
    height: 22px;
    padding-left: 16px;
    font-family: Roboto, sans-serif;
    font-size: 12px;
    font-weight: 600;
    line-height: 22px;
}

.count b {
    margin-left: 8px;
    color: #2020ee;
    font-weight: normal;
}

.raw-tabs {
    gap: 1px;
}

.raw-tabs button {
    min-width: 51px;
    padding-left: 4px;
    justify-content: flex-start;
}

.raw-tabs .active {
    min-width: 53px;
}

/* context menu */
.context-menu {
    position: absolute;
    top: 57px;
    left: 108px;
    z-index: 2;
    width: 287px;
    padding: 2px 3px;
    border: 1px solid #bbb;
    background: #f2f2f2;
    box-shadow: 2px 2px 2px #777;
    list-style: none;
    font-size: 11px;
    font-weight: 500;
}

.context-menu li {
    position: relative;
}

.context-menu button {
    width: 100%;
    height: 21px;
    padding: 0 18px 0 29px;
    justify-content: flex-start;
}

.context-menu button:disabled {
    color: #8a8a8a;
}

.context-menu kbd {
    margin-left: auto;
    font-family: inherit;
}

.context-menu .divider {
    height: 8px;
    margin-left: 28px;
    background: linear-gradient(#d4d4d4, #d4d4d4) 0 4px / 100% 1px no-repeat;
}

.context-menu .hover {
    background: #91c9f7;
}

.context-menu .checked {
    background: linear-gradient(#91c9f7, #91c9f7) 0 0 / 21px 100% no-repeat;
}

.context-menu .checked button {
    padding-left: 6px;
    gap: 13px;
}

.cursor {
    position: absolute;
    top: 8px;
    left: 36px;
    z-index: 3;
}

/* hex view */
.hex-pane {
    display: flex;
    flex-direction: column;
    flex: none;
    padding-top: 3px;
}

.hex-tools {
    display: flex;
    align-items: center;
    justify-content: flex-end;
    height: 30px;
    padding: 0 9px 0 0;
    font-family: "Liberation Sans", Arial, sans-serif;
    font-size: 11px;
}

.hex-tools .field {
    width: 142px;
    height: 20px;
    margin: 0 15px 0 4px;
}

.hex-tools .field input {
    font-size: 11px;
}

.hex-box {
    display: flex;
    height: 125px;
    margin: 0 3px 0 2px;
    border-top: 2px solid #888;
    border-left: 1px solid #888;
    background: #fff;
}

.hex-scroll {
    flex: 1;
    overflow: hidden;
}

.hex {
    width: auto;
    table-layout: auto;
    font-family: "DejaVu Sans Mono", monospace;
    font-size: 11px;
    line-height: 12px;
}

.hex th {
    width: 61px;
    padding-right: 3px;
    background: #f0f0f0;
    text-align: right;
}

.hex tr:first-child th {
    background: #999;
    color: #ddd;
}

.hex td {
    width: 20px;
    height: 13px;
    color: #25257a;
    text-align: right;
}

.hex tr:nth-child(3n) td {
    height: 12px;
}

.hex td:nth-child(even) {
    width: 21px;
    color: #3030dd;
}

.hex .ascii {
    width: auto;
    height: auto;
    padding-left: 14px;
    font-family: "Liberation Mono", monospace;
    font-size: 13px;
    text-align: left;
    white-space: pre;
}

.hex td.ascii:last-child {
    color: #222;
}

.track-hex {
    height: 17px;
    margin-top: 4px;
}

.hex-tabs {
    height: 21px;
    gap: 1px;
    font-family: "Liberation Sans", Arial, sans-serif;
    font-size: 11px;
}

.hex-tabs button {
    height: 18px;
    padding: 0 3px 0 4px;
}

.hex-tabs .active {
    height: 20px;
    padding: 2px 12px 0 4px;
}

.statusbar {
    flex: none;
    height: 11px;
    border-top: 1px solid #aaa;
    background: #f3f3f3;
}

/* right side buttons */
.side {
    display: flex;
    flex-direction: column;
    align-items: center;
    flex: none;
    gap: 7px;
    width: 44px;
    margin-top: 27px;
    padding-top: 4px;
    border-left: 1px solid #a8a8a8;
}

.side button {
    height: 30px;
}

.side text {
    font-family: "DejaVu Sans Mono", monospace;
    font-size: 7px;
    font-weight: bold;
}

/* taskbar */
.taskbar {
    display: flex;
    flex: none;
    height: 29px;
    background: #0a1a24;
    color: #fff;
}

.taskbar button {
    width: 36px;
    border-bottom: 2px solid transparent;
}

.taskbar button:first-child {
    margin-right: 3px;
    width: 33px;
}

.taskbar .open {
    background: linear-gradient(#9cc8ee, #9cc8ee) center bottom / 27px 2px no-repeat border-box;
}

.taskbar .current {
    background: #0f4c85;
    border-bottom-color: #9cc8ee;
}

.tray {
    display: flex;
    align-items: center;
    gap: 9px;
    margin-left: auto;
    padding-right: 9px;
    font-size: 12px;
    font-weight: 600;
}
```
